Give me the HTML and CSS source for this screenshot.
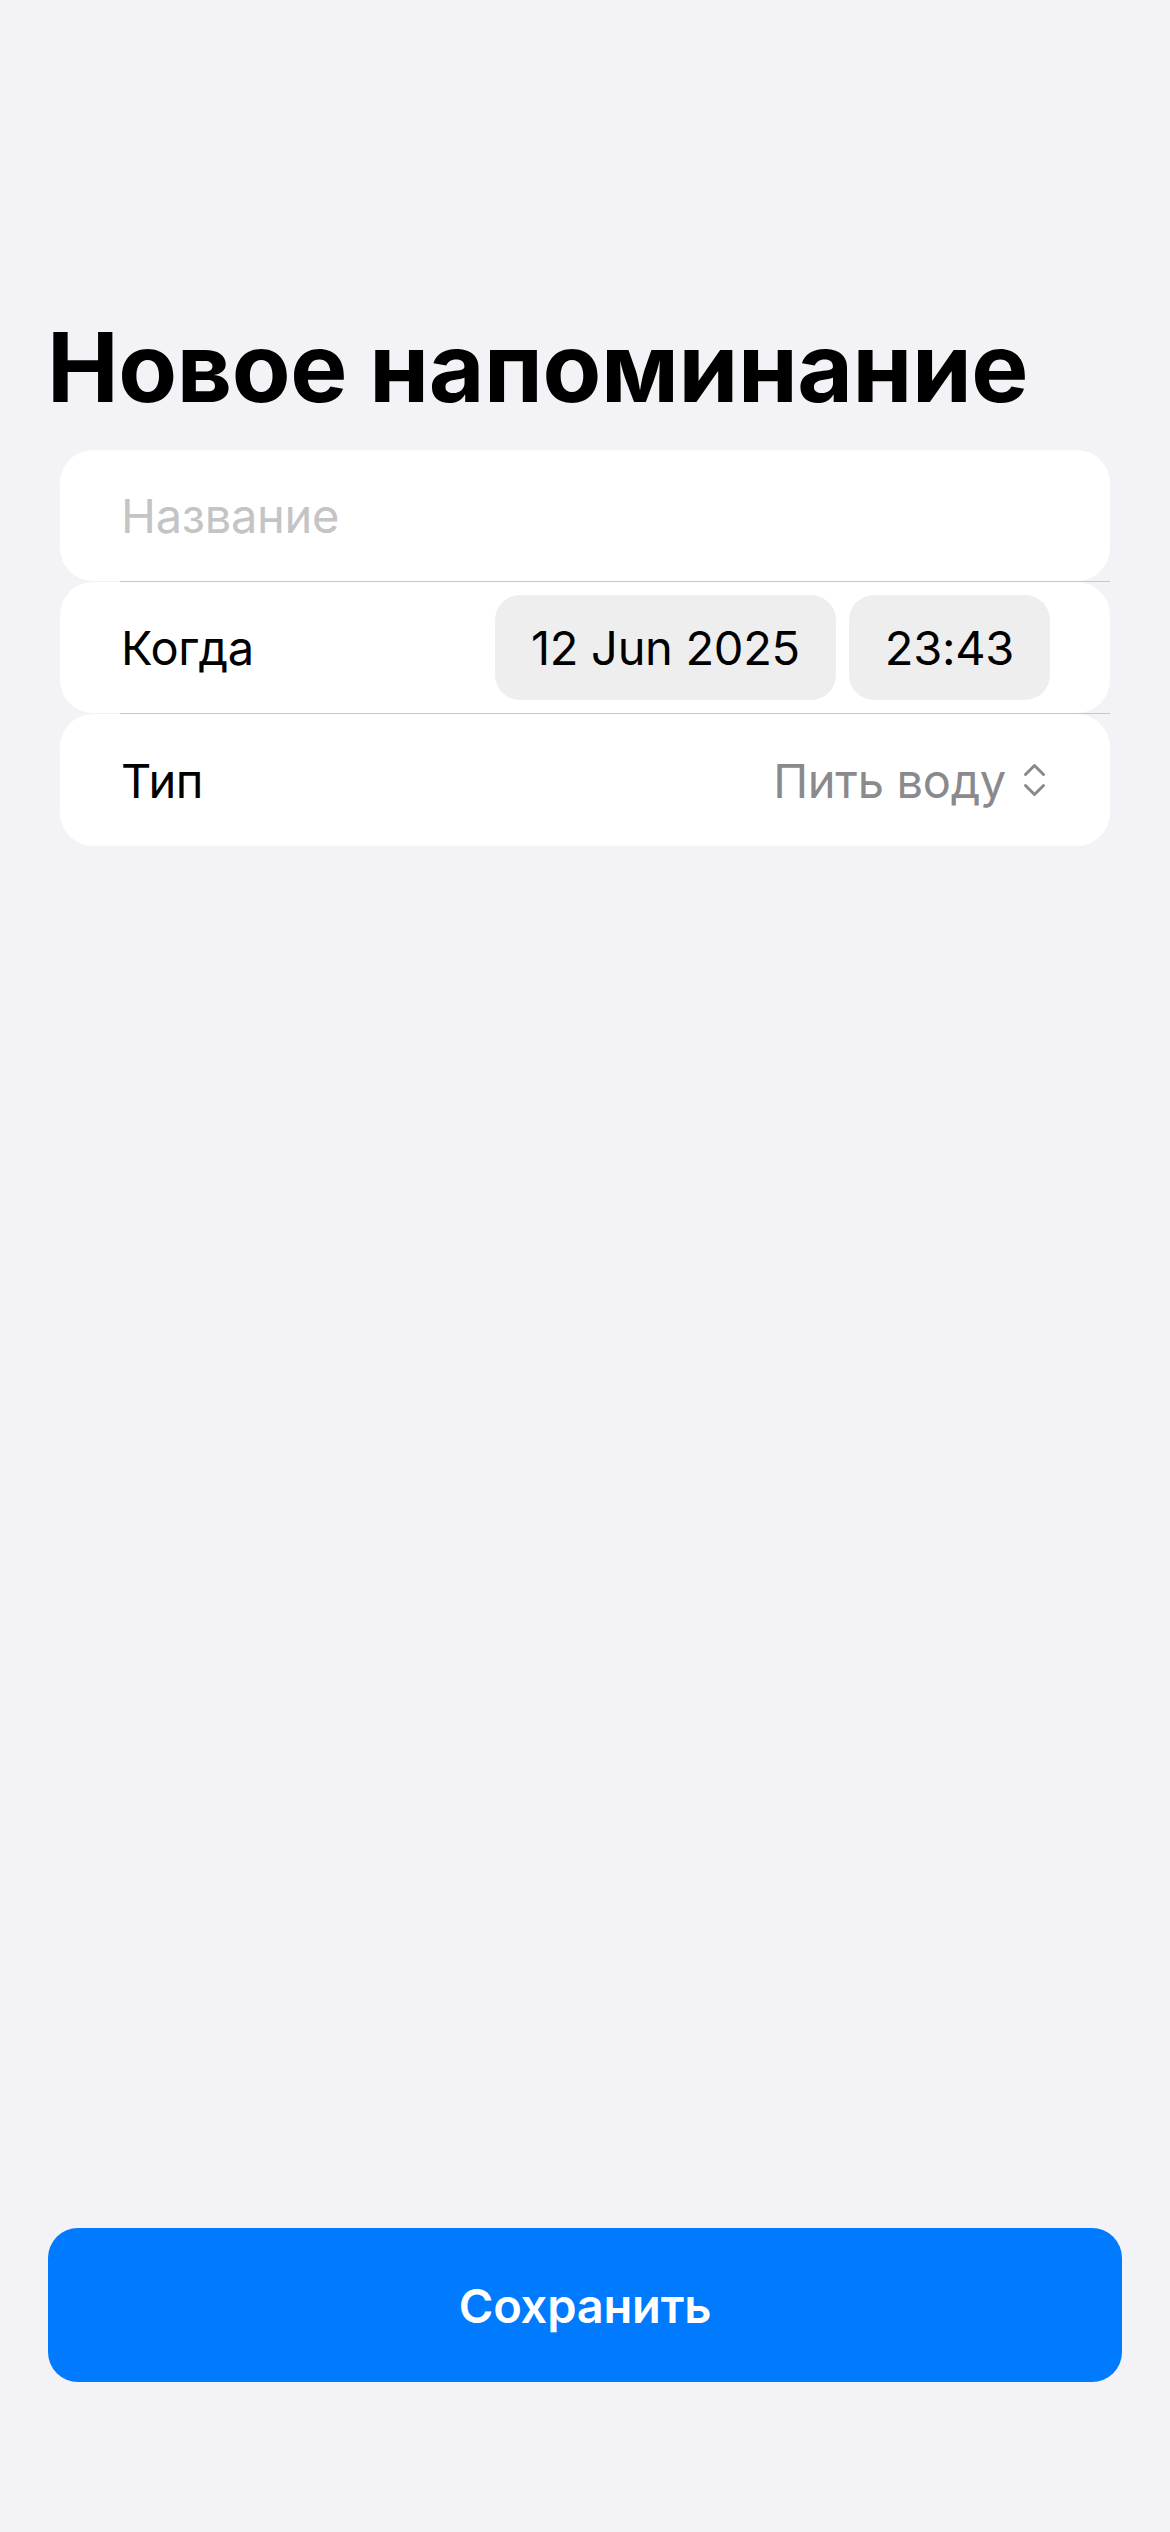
FILE: index.html
```html
<!DOCTYPE html>
<html lang="ru">
<head>
<meta charset="utf-8">
<title>Новое напоминание</title>
<link rel="stylesheet" href="styles.css">
</head>
<body>
<main class="page">
  <h1 class="title">Новое напоминание</h1>
  <section class="form">
    <div class="row">
      <span class="placeholder">Название</span>
    </div>
    <div class="sep"></div>
    <div class="row">
      <span class="label">Когда</span>
      <div class="pills">
        <span class="pill">12 Jun 2025</span>
        <span class="pill">23:43</span>
      </div>
    </div>
    <div class="sep"></div>
    <div class="row row-type">
      <span class="label">Тип</span>
      <div class="picker">
        <span class="picker-value">Пить воду</span>
        <svg class="chevrons" width="25" height="38" viewBox="0 0 25 38" aria-hidden="true">
          <path d="M3.5 13.5 L12.5 4.5 L21.5 13.5" fill="none" stroke="#8a8a8e" stroke-width="3" stroke-linecap="round" stroke-linejoin="round"/>
          <path d="M3.5 24.5 L12.5 33.5 L21.5 24.5" fill="none" stroke="#8a8a8e" stroke-width="3" stroke-linecap="round" stroke-linejoin="round"/>
        </svg>
      </div>
    </div>
  </section>
  <button class="save">Сохранить</button>
</main>
</body>
</html>
```
FILE: styles.css
```css
html, body {
  margin: 0;
  padding: 0;
  background: #f2f2f7;
}

body {
  font-family: Inter, "Noto Sans", "Liberation Sans", sans-serif;
  color: #000;
}

.page {
  box-sizing: border-box;
  min-height: 2532px;
  display: flex;
  flex-direction: column;
  padding: 307px 48px 150px;
}

.title {
  margin: 0 0 23px -1px;
  font-size: 96px;
  line-height: 120px;
  font-weight: 700;
  letter-spacing: -0.4px;
  white-space: nowrap;
}

.form {
  margin: 0 12px;
  display: flex;
  flex-direction: column;
}

.row {
  box-sizing: border-box;
  height: 131px;
  background: #fff;
  border-radius: 33px;
  display: flex;
  align-items: center;
  justify-content: space-between;
  padding: 0 60px 0 61px;
  font-size: 47px;
  letter-spacing: -0.3px;
}

.row-type {
  height: 132px;
  padding-right: 63px;
}

.sep {
  height: 1px;
  margin-left: 60px;
  background: #c6c6c8;
}

.placeholder {
  color: #c4c4c6;
}

.pills {
  display: flex;
  gap: 13px;
}

.pill {
  box-sizing: border-box;
  height: 105px;
  display: flex;
  align-items: center;
  padding: 0 36px;
  border-radius: 25px;
  background: #eeeeef;
}

.picker {
  display: flex;
  align-items: center;
  gap: 16px;
}

.picker-value {
  color: #8a8a8e;
}

.chevrons {
  display: block;
}

.save {
  margin-top: auto;
  height: 154px;
  border: none;
  border-radius: 30px;
  background: #007aff;
  color: #fff;
  font-family: Inter, "Noto Sans", "Liberation Sans", sans-serif;
  font-size: 47px;
  font-weight: 600;
  letter-spacing: -0.2px;
}
```
